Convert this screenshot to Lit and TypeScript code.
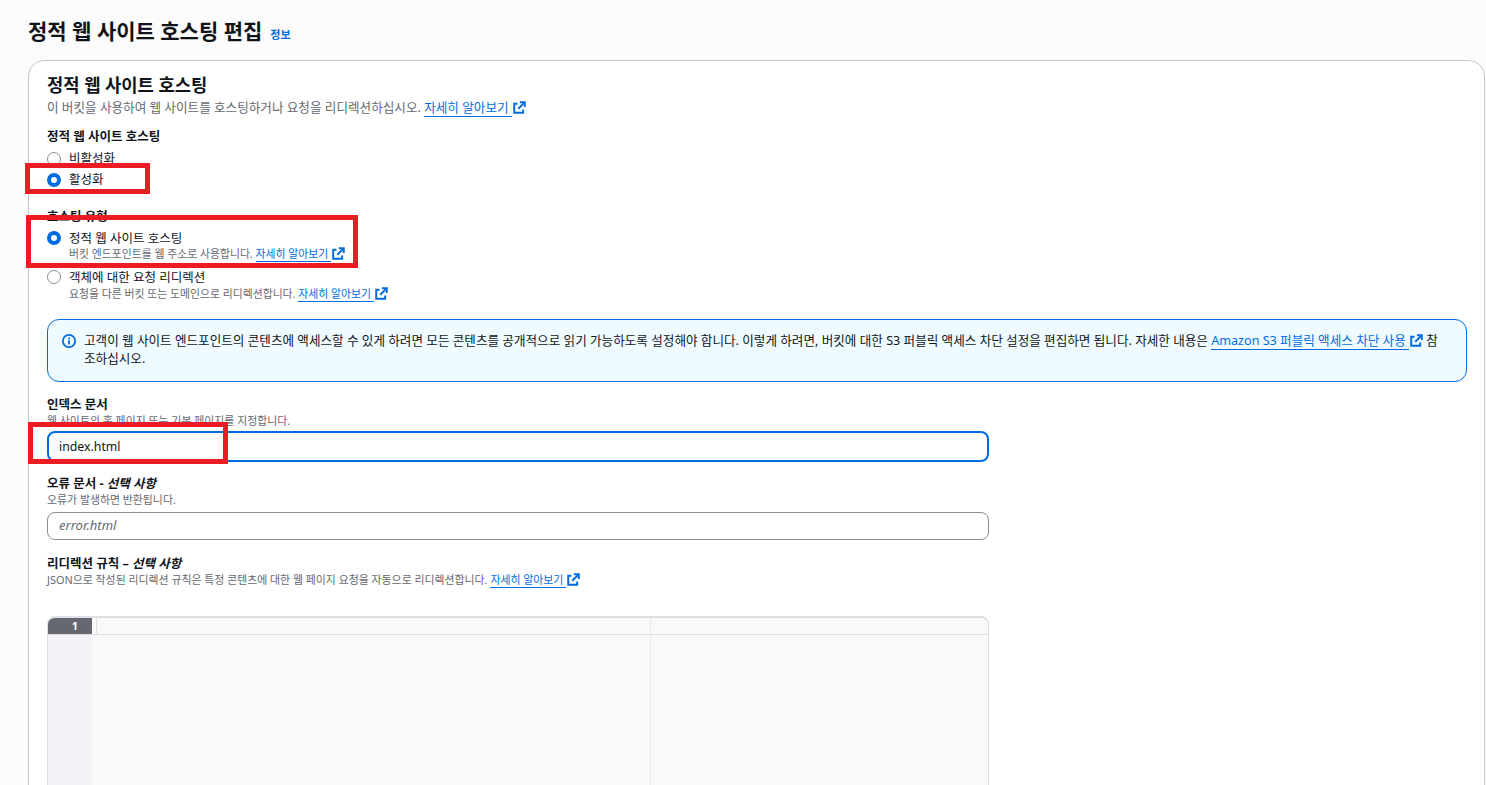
import { LitElement, html, css } from "lit";
import { customElement } from "lit/decorators.js";

const ext = html`<svg class="ext" viewBox="0 0 16 16" fill="none" stroke="#006ce0" stroke-width="2.4"><path d="M5.5 3.5H1.5v11H12.5V10.5"/><path d="M8.5 1.5h6V7.5"/><path d="M14 2 6.5 9.5"/></svg>`;
const learn = html`<a class="link">자세히 알아보기 </a>${ext}`;

@customElement("app-root")
export class AppRoot extends LitElement {
  static styles = css`
    :host { display: block; height: 785px; overflow: hidden; position: relative; background: #fbfbfb; color: #0f141a;
      font-family: "Noto Sans", "Noto Sans CJK KR", sans-serif; font-size: 12.5px; line-height: 16px; }
    .head { display: flex; align-items: flex-start; gap: 8px; padding: 17px 0 0 28px; height: 60px; box-sizing: border-box; }
    h1 { margin: 0; font-size: 21px; line-height: 28px; font-weight: 700; }
    .info { font-size: 11px; line-height: 16px; margin-top: 10px; font-weight: 700; color: #006ce0; }
    .card { margin-left: 28px; width: 1457px; box-sizing: border-box; height: 900px; background: #fff; border: 1px solid #c6c6cd; border-radius: 16px; padding: 12px 18px 0; }
    h2 { margin: 0; font-size: 17.7px; line-height: 24px; font-weight: 700; }
    .desc { color: #656871; font-size: 12.6px; line-height: 16px; margin-top: 3px; }
    .fdesc { color: #656871; font-size: 10.9px; line-height: 16px; margin-top: 0; }
    .link { color: #006ce0; border-bottom: 1px solid #006ce0; }
    .ext { width: 13px; height: 13px; vertical-align: -2px; margin-left: 1px; }
    .label { font-weight: 700; font-size: 12.5px; line-height: 16px; }
    .sec1 { margin-top: 13px; }
    .sec2 { margin-top: 19px; }
    .list1 { margin-top: 4px; display: flex; flex-direction: column; gap: 1px; }
    .list2 { margin-top: 6px; display: flex; flex-direction: column; gap: 9px; }
    .radio { display: flex; gap: 8px; align-items: flex-start; line-height: 20px; }
    .dot { width: 14px; height: 14px; border-radius: 50%; box-sizing: border-box; border: 1px solid #8c8c94; margin-top: 3px; flex: none; background: #fff; }
    .dot.on { border: 4.5px solid #006ce0; }
    .radio .sub { color: #656871; font-size: 10.85px; line-height: 14px; margin-top: 0; }
    .radio.second .sub { margin-top: 1px; }
    .radio .t { line-height: 16px; }
    .radio.tall .dot { margin-top: 0; }
    .alert { width: 1420px; box-sizing: border-box; height: 63px; margin-top: 18px; background: #f0fbff; border: 1px solid #006ce0; border-radius: 12px; padding: 12px 20px 0 14px; display: flex; gap: 8px; font-size: 12.6px; line-height: 18px; }
    .alert svg.i { width: 14px; height: 14px; flex: none; margin-top: 2px; }
    .field { width: 942px; }
    .f1 { margin-top: 15px; }
    .f2 { margin-top: 14px; }
    .f3 { margin-top: 16px; }
    .input { height: 28px; box-sizing: border-box; border: 1px solid #8c8c94; border-radius: 8px; background: #fff; padding: 0 11px 2px; display: flex; align-items: center; font-size: 13px; margin-top: 4px; }
    .input.focus { border: 2px solid #006ce0; height: 31px; padding: 0 10px; margin-top: 2px; font-size: 12.3px; }
    .input.ph { color: #656871; font-style: italic; }
    em { font-style: italic; }
    .editor { margin-top: 28px; width: 942px; height: 300px; box-sizing: border-box; border: 1px solid #dedee3; border-top-width: 2px; border-radius: 8px 8px 0 0; background: #f9f9fa; overflow: hidden;
      display: grid; grid-template-columns: 44px 5px 554px 1fr; grid-template-rows: 17px 1fr; }
    .num { background: #656871; color: #fff; font-size: 11px; font-weight: 700; text-align: right; padding-right: 14px; line-height: 16px; box-sizing: border-box; border-bottom: 1px solid #dedee3; }
    .top { border-bottom: 1px solid #dedee3; }
    .top.a { border-right: 1px solid #dedee3; }
    .top.b { border-right: 1px solid #e9ebed; }
    .gut { background: #f3f3f7; }
    .cell { border-right: 1px solid #e9ebed; }
    .red { position: absolute; border: 5px solid #ed1c24; box-sizing: border-box; }
    .r1 { left: 25px; top: 163px; width: 125px; height: 31px; }
    .r2 { left: 26px; top: 215px; width: 332px; height: 53px; }
    .r3 { left: 28px; top: 422px; width: 200px; height: 42px; }
  `;

  render() {
    return html`
      <div class="head"><h1>정적 웹 사이트 호스팅 편집</h1><span class="info">정보</span></div>
      <div class="card">
        <h2>정적 웹 사이트 호스팅</h2>
        <div class="desc">이 버킷을 사용하여 웹 사이트를 호스팅하거나 요청을 리디렉션하십시오. ${learn}</div>
        <div class="sec1">
          <div class="label">정적 웹 사이트 호스팅</div>
          <div class="list1">
            <div class="radio"><span class="dot"></span><span>비활성화</span></div>
            <div class="radio"><span class="dot on"></span><span>활성화</span></div>
          </div>
        </div>
        <div class="sec2">
          <div class="label">호스팅 유형</div>
          <div class="list2">
            <div class="radio tall"><span class="dot on"></span><div><div class="t">정적 웹 사이트 호스팅</div><div class="sub">버킷 엔드포인트를 웹 주소로 사용합니다. ${learn}</div></div></div>
            <div class="radio tall second"><span class="dot"></span><div><div class="t">객체에 대한 요청 리디렉션</div><div class="sub">요청을 다른 버킷 또는 도메인으로 리디렉션합니다. ${learn}</div></div></div>
          </div>
        </div>
        <div class="alert">
          <svg class="i" viewBox="0 0 16 16" fill="none" stroke="#006ce0" stroke-width="2"><circle cx="8" cy="8" r="7"/><path d="M8 7v5M8 4v2"/></svg>
          <div>고객이 웹 사이트 엔드포인트의 콘텐츠에 액세스할 수 있게 하려면 모든 콘텐츠를 공개적으로 읽기 가능하도록 설정해야 합니다. 이렇게 하려면, 버킷에 대한 S3 퍼블릭 액세스 차단 설정을 편집하면 됩니다. 자세한 내용은 <a class="link">Amazon S3 퍼블릭 액세스 차단 사용 </a>${ext} 참조하십시오.</div>
        </div>
        <div class="field f1">
          <div class="label">인덱스 문서</div>
          <div class="fdesc">웹 사이트의 홈 페이지 또는 기본 페이지를 지정합니다.</div>
          <div class="input focus">index.html</div>
        </div>
        <div class="field f2">
          <div class="label">오류 문서 - <em>선택 사항</em></div>
          <div class="fdesc">오류가 발생하면 반환됩니다.</div>
          <div class="input ph">error.html</div>
        </div>
        <div class="field f3">
          <div class="label">리디렉션 규칙 – <em>선택 사항</em></div>
          <div class="fdesc">JSON으로 작성된 리디렉션 규칙은 특정 콘텐츠에 대한 웹 페이지 요청을 자동으로 리디렉션합니다. ${learn}</div>
        </div>
        <div class="editor">
          <div class="num">1</div><div class="top a"></div><div class="top b"></div><div class="top"></div>
          <div class="gut"></div><div></div><div class="cell"></div><div></div>
        </div>
      </div>
      <div class="red r1"></div>
      <div class="red r2"></div>
      <div class="red r3"></div>
    `;
  }
}
